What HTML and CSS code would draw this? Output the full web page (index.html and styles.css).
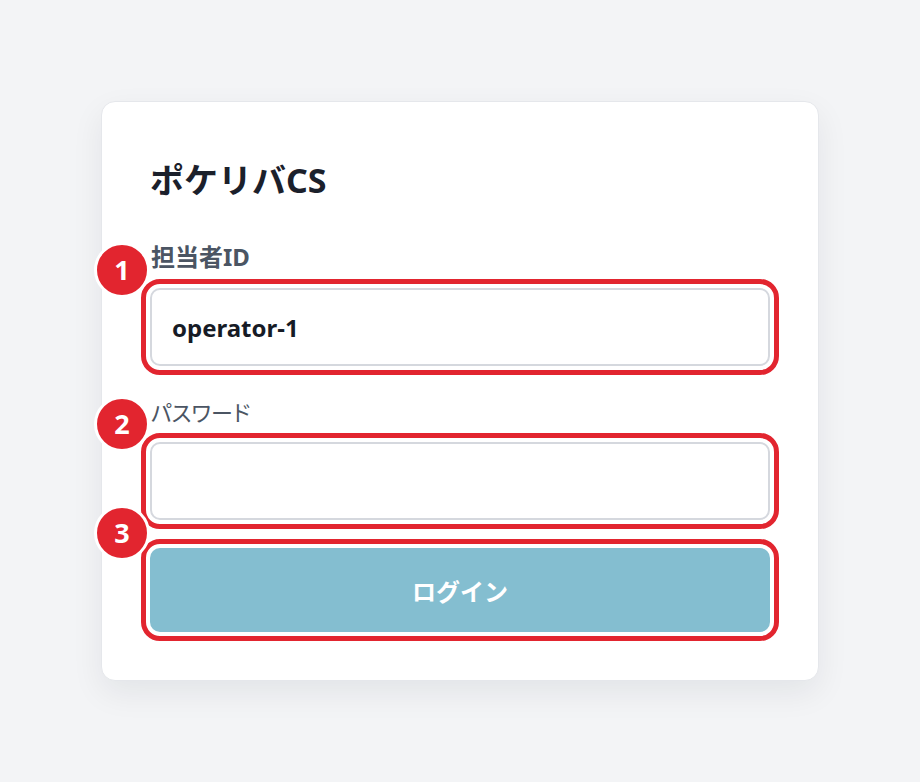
FILE: index.html
```html
<!DOCTYPE html>
<html lang="ja">
<head>
<meta charset="utf-8">
<title>ポケリバCS</title>
<link rel="stylesheet" href="styles.css">
</head>
<body>
<main class="card">
  <h1 class="title">ポケリバCS</h1>
  <form class="form">
    <div class="field field-id">
      <label class="label label-bold" for="opid">担当者ID</label>
      <div class="box">
        <input class="input" id="opid" type="text" value="operator-1">
        <span class="badge">1</span>
      </div>
    </div>
    <div class="field field-pw">
      <label class="label label-regular" for="pw">パスワード</label>
      <div class="box">
        <input class="input" id="pw" type="password" value="">
        <span class="badge">2</span>
      </div>
    </div>
    <div class="box box-button">
      <button class="button" type="button">ログイン</button>
      <span class="badge badge-button">3</span>
    </div>
  </form>
</main>
</body>
</html>
```

FILE: styles.css
```css
* {
  box-sizing: border-box;
}

html, body {
  margin: 0;
  padding: 0;
}

body {
  min-height: 100vh;
  background: #f3f4f6;
  display: flex;
  align-items: center;
  justify-content: center;
  font-family: "Noto Sans", "Noto Sans CJK JP", sans-serif;
  color: #1f2937;
}

.card {
  width: 718px;
  height: 580px;
  background: #ffffff;
  border: 1px solid #e5e7eb;
  border-radius: 14px;
  box-shadow: 0 12px 32px rgba(17, 24, 39, 0.07);
  padding: 58px 48px 48px;
  display: flex;
  flex-direction: column;
}

.title {
  margin: 0 0 42px;
  font-size: 34px;
  line-height: 40px;
  font-weight: 700;
  color: #1b202b;
  letter-spacing: 0;
}

.form {
  display: flex;
  flex-direction: column;
}

.field {
  display: flex;
  flex-direction: column;
  gap: 16px;
}

.field-id {
  margin-bottom: 31px;
}

.field-pw {
  margin-bottom: 28px;
  gap: 15px;
}

.label {
  font-size: 22px;
  line-height: 30px;
  color: #4b5563;
  padding-left: 1px;
}

.label-bold {
  font-size: 24px;
  font-weight: 700;
}

.label-regular {
  font-weight: 400;
  font-feature-settings: "palt";
}

.box {
  position: relative;
  border-radius: 10px;
  outline: 5px solid #e2252f;
  outline-offset: 4px;
}

.input {
  display: block;
  width: 100%;
  height: 78px;
  border: 2px solid #d5d8de;
  border-radius: 10px;
  padding: 0 20px;
  font-family: "Noto Sans", "Noto Sans CJK JP", sans-serif;
  font-size: 24px;
  font-weight: 700;
  color: #161b26;
  background: #ffffff;
  outline: none;
}

.button {
  display: block;
  width: 100%;
  height: 84px;
  border: none;
  border-radius: 10px;
  background: #84bed0;
  color: #ffffff;
  font-family: "Noto Sans CJK JP", sans-serif;
  font-size: 24px;
  font-weight: 700;
  cursor: pointer;
}

.badge {
  position: absolute;
  left: -56px;
  top: -46px;
  width: 56px;
  height: 56px;
  border-radius: 50%;
  background: #e2252f;
  border: 3px solid #ffffff;
  color: #ffffff;
  font-family: "Open Sans", "Noto Sans", sans-serif;
  font-size: 27px;
  font-weight: 700;
  line-height: 50px;
  text-align: center;
}

.badge-button {
  top: -43px;
}
```
